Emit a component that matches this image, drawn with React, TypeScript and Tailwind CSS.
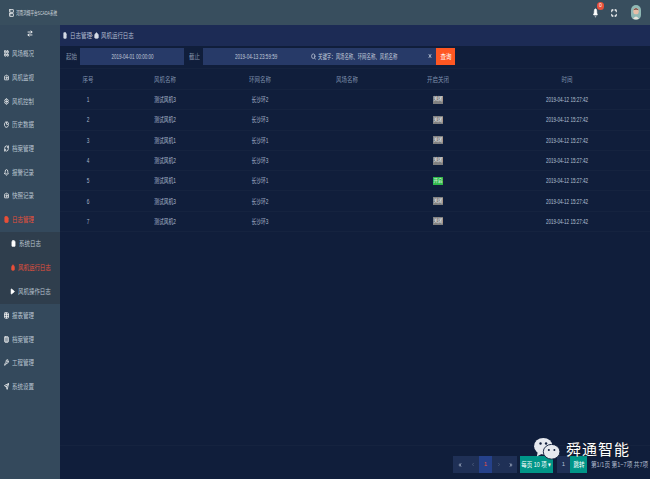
import React from 'react';
import { Bell, ArrowRightLeft, LayoutGrid, Camera, Settings, PieChart, Search, Wrench, Send, FileText, Home, Play, Table, Columns3, Clipboard, ChevronRight, ChevronLeft, ChevronsLeft, ChevronsRight, X, RefreshCw, Server, Maximize } from 'lucide-react';

const font = "font-['Liberation_Sans','Noto_Sans_CJK_SC',sans-serif]";

// 原图的文字和图标都是被横向压缩过的
const cnLeft = 'inline-block origin-left scale-x-[.78] whitespace-nowrap text-[7px] leading-none';
const cnMid = 'inline-block origin-center scale-x-[.78] whitespace-nowrap text-[7px] leading-none';
const cellMid = 'inline-block origin-center scale-x-[.68] whitespace-nowrap text-[7px] leading-none';
const numMid = 'inline-block origin-center scale-x-[.65] whitespace-nowrap text-[7px] leading-none';
const squeeze = { preserveAspectRatio: 'none' };

const menu = [
  { name: '风场概况', icon: LayoutGrid },
  { name: '风机监视', icon: Camera },
  { name: '风机控制', icon: Settings },
  { name: '历史数据', icon: PieChart },
  { name: '档案管理', icon: RefreshCw },
  { name: '报警记录', icon: Bell },
  { name: '快照记录', icon: Camera },
];

const menuBottom = [
  { name: '报表管理', icon: Table },
  { name: '档案管理', icon: Columns3 },
  { name: '工程管理', icon: Wrench },
  { name: '系统设置', icon: Send },
];

const rows = [
  { id: 1, fan: '测试风机3', ring: '长沙环2', on: false },
  { id: 2, fan: '测试风机2', ring: '长沙环3', on: false },
  { id: 3, fan: '测试风机1', ring: '长沙环1', on: false },
  { id: 4, fan: '测试风机2', ring: '长沙环3', on: false },
  { id: 5, fan: '测试风机1', ring: '长沙环1', on: true },
  { id: 6, fan: '测试风机3', ring: '长沙环2', on: false },
  { id: 7, fan: '测试风机2', ring: '长沙环3', on: false },
];

const gridCols = 'grid grid-cols-[56px_98px_92px_82px_100px_158px] items-center text-center';

const App: React.FC = () => {
  return (
    <div className={`relative flex h-[479px] w-[650px] flex-col overflow-hidden bg-[#34495c] text-[6px] ${font}`}>
      {/* 顶部 */}
      <div className="flex h-[25px] shrink-0 items-center bg-[#384e5e] pl-[9px] pr-[9px] text-[#cfd6dd]">
        <Server {...squeeze} className="h-[8px] w-[5px] text-white" strokeWidth={3} />
        <span className="ml-[2px] inline-block origin-left scale-x-[.6] whitespace-nowrap text-[6px] leading-none">河南鸿翔平台SCADA系统</span>
        <div className="ml-auto flex items-center">
          <div className="relative">
            <Bell {...squeeze} className="h-[10px] w-[5px] fill-white text-white" />
            <span className="absolute left-[4px] top-[-6px] flex h-[8px] w-[7px] items-center justify-center rounded-full bg-[#e8503a] text-[5px] leading-none text-white">0</span>
          </div>
          <Maximize {...squeeze} className="ml-[13px] h-[8px] w-[6px] text-white" strokeWidth={4} />
          <div className="ml-[14px] flex h-[15px] w-[10px] items-start justify-center overflow-hidden rounded-full bg-[#8fb8b4]">
            <svg viewBox="0 0 11 15" className="h-[15px] w-[10px]">
              <ellipse cx="5.5" cy="6" rx="3" ry="3.5" fill="#e6bfa8" />
              <path d="M2.5 5 Q5.5 0.5 8.5 5 Q5.5 3.5 2.5 5Z" fill="#5a2c2c" />
              <path d="M2 15 Q5.5 9 9 15Z" fill="#e8e4dc" />
            </svg>
          </div>
        </div>
      </div>

      <div className="flex min-h-0 flex-1">
        {/* 侧边栏 */}
        <div className="w-[60px] shrink-0 text-[#b9c4d0]">
          <div className="flex h-[17px] items-center justify-center">
            <ArrowRightLeft {...squeeze} className="h-[7px] w-[6px] text-white" strokeWidth={3} />
          </div>
          {menu.map((m, i) => (
            <div key={i} className="flex h-[23.7px] items-center pl-[4px]">
              <m.icon {...squeeze} className="h-[7px] w-[5px] text-white" strokeWidth={3} />
              <span className={`ml-[3px] ${cnLeft}`}>{m.name}</span>
            </div>
          ))}
          <div className="flex h-[23.7px] items-center pl-[4px] text-[#e8503a]">
            <FileText {...squeeze} className="h-[7px] w-[5px] fill-[#e8503a]" strokeWidth={3} />
            <span className={`ml-[3px] ${cnLeft}`}>日志管理</span>
          </div>
          <div className="bg-[#2f3e4d]">
            <div className="flex h-[24px] items-center pl-[11px]">
              <Clipboard {...squeeze} className="h-[7px] w-[5px] fill-white text-white" />
              <span className={`ml-[3px] ${cnLeft}`}>系统日志</span>
            </div>
            <div className="flex h-[24px] items-center pl-[11px] text-[#e8503a]">
              <Home {...squeeze} className="h-[7px] w-[5px] fill-[#e8503a]" />
              <span className={`ml-[3px] ${cnLeft}`}>风机运行日志</span>
            </div>
            <div className="flex h-[24px] items-center pl-[10px]">
              <Play {...squeeze} className="h-[7px] w-[5px] fill-white text-white" />
              <span className={`ml-[3px] ${cnLeft}`}>风机操作日志</span>
            </div>
          </div>
          {menuBottom.map((m, i) => (
            <div key={i} className="flex h-[23.7px] items-center pl-[4px]">
              <m.icon {...squeeze} className="h-[7px] w-[5px] text-white" strokeWidth={3} />
              <span className={`ml-[3px] ${cnLeft}`}>{m.name}</span>
            </div>
          ))}
        </div>

        {/* 主体 */}
        <div className="flex min-w-0 flex-1 flex-col bg-[#101e3b] text-[#a9b6cb]">
          <div className="flex h-[21px] shrink-0 items-center bg-[#1c2b55] pl-[3px] text-[#b4bfd2]">
            <FileText {...squeeze} className="h-[7px] w-[4px] fill-[#d5dbe6] text-[#d5dbe6]" />
            <span className={`ml-[3px] w-[20px] ${cnLeft}`}>日志管理</span>
            <ChevronRight {...squeeze} className="h-[5px] w-[4px]" strokeWidth={3} />
            <Home {...squeeze} className="h-[7px] w-[5px] fill-[#d5dbe6] text-[#d5dbe6]" />
            <span className={`ml-[2px] ${cnLeft}`}>风机运行日志</span>
          </div>

          <div className="flex h-[23px] shrink-0 items-center border-b border-[#15233f] pb-[2px] pl-[6px]">
            <span className={`w-[14px] text-[#8492aa] ${cnLeft}`}>起始</span>
            <div className="flex h-[17px] w-[104px] items-center justify-center bg-[#273a68] text-[#c2cbda]">
              <span className={numMid}>2019-04-01 00:00:00</span>
            </div>
            <span className={`ml-[5px] w-[14px] text-[#8492aa] ${cnLeft}`}>截止</span>
            <div className="flex h-[17px] w-[233px] items-center bg-[#273a68] text-[#c2cbda]">
              <span className={`ml-[32px] w-[41px] origin-left ${numMid}`}>2019-04-13 23:59:59</span>
              <Search {...squeeze} className="ml-[35px] h-[7px] w-[5px]" strokeWidth={3} />
              <span className="ml-[2px] inline-block w-[80px] origin-left scale-x-[.63] whitespace-nowrap text-[7px] leading-none">关键字：风场名称、环网名称、风机名称</span>
              <X {...squeeze} className="ml-auto mr-[4px] h-[6px] w-[4px]" strokeWidth={4} />
            </div>
            <div className="flex h-[17px] w-[19px] items-center justify-center bg-[#ff5722] text-white">
              <span className={cnMid}>查询</span>
            </div>
          </div>

          <div className="min-h-0 flex-1">
            <div className={`${gridCols} h-[21px] border-b border-[#15233f] text-[#7f90ad]`}>
              <span className={cnMid}>序号</span>
              <span className={cnMid}>风机名称</span>
              <span className={cnMid}>环网名称</span>
              <span className={cnMid}>风场名称</span>
              <span className={cnMid}>开启关闭</span>
              <span className={cnMid}>时间</span>
            </div>
            {rows.map(r => (
              <div key={r.id} className={`${gridCols} h-[20.3px] border-b border-[#15233f]`}>
                <span className={cellMid}>{r.id}</span>
                <span className={cellMid}>{r.fan}</span>
                <span className={cellMid}>{r.ring}</span>
                <span></span>
                <span className="flex justify-center">
                  <span className={`flex h-[8px] w-[10px] items-center justify-center text-[4.5px] leading-none text-white ${r.on ? 'bg-[#2eb84a]' : 'bg-[#808080]'}`}>
                    {r.on ? '开启' : '关闭'}
                  </span>
                </span>
                <span className={`text-[#b4c0d4] ${numMid}`}>2019-04-12 15:27:42</span>
              </div>
            ))}
          </div>

          {/* 分页 */}
          <div className="flex h-[34px] shrink-0 items-start justify-end border-t border-[#15233f] pt-[10px] text-[#b4bfd2]">
            <div className="flex h-[17px] items-center bg-[#1f3056]">
              <span className="flex h-full w-[13px] items-center justify-center"><ChevronsLeft {...squeeze} className="h-[6px] w-[4px]" strokeWidth={3} /></span>
              <span className="flex h-full w-[13px] items-center justify-center text-[#5f6f8c]"><ChevronLeft {...squeeze} className="h-[5px] w-[4px]" strokeWidth={3} /></span>
              <span className="flex h-full w-[13px] items-center justify-center bg-[#25418a] text-[6px] text-[#e8503a]">1</span>
              <span className="flex h-full w-[13px] items-center justify-center text-[#5f6f8c]"><ChevronRight {...squeeze} className="h-[5px] w-[4px]" strokeWidth={3} /></span>
              <span className="flex h-full w-[12px] items-center justify-center"><ChevronsRight {...squeeze} className="h-[6px] w-[4px]" strokeWidth={3} /></span>
            </div>
            <div className="ml-[3px] flex h-[17px] w-[33px] items-center justify-center bg-[#009688] text-white">
              <span className={`${cnMid} text-[6px]`}>每页 10 项 ▾</span>
            </div>
            <div className="ml-[4px] flex h-[17px] w-[13px] items-center justify-center bg-[#1f3056] text-[6px]">1</div>
            <div className="flex h-[17px] w-[17px] items-center justify-center bg-[#009688] text-white">
              <span className={cnMid}>跳转</span>
            </div>
            <span className="ml-[4px] mt-[5px] inline-block w-[59px] origin-left scale-x-[.8] whitespace-nowrap text-[7px] leading-none">第1/1页 第1~7项 共7项</span>
          </div>
        </div>
      </div>

      {/* 水印 */}
      <div className="absolute left-[533px] top-[437px] flex items-center">
        <svg viewBox="0 0 30 26" className="h-[24px] w-[28px]">
          <ellipse cx="11" cy="10" rx="10" ry="9" fill="#e6e9ee" />
          <path d="M5 16 L4 21 L10 18Z" fill="#e6e9ee" />
          <ellipse cx="20" cy="16" rx="9" ry="8" fill="#e6e9ee" stroke="#101e3b" strokeWidth="1" />
          <circle cx="8" cy="7" r="1.3" fill="#101e3b" />
          <circle cx="14" cy="7" r="1.3" fill="#101e3b" />
          <circle cx="17" cy="14" r="1.1" fill="#101e3b" />
          <circle cx="23" cy="14" r="1.1" fill="#101e3b" />
        </svg>
        <span className="ml-[5px] text-[15px] leading-none tracking-[1px] text-white [text-shadow:0_0_2px_#1a1a1a]">舜通智能</span>
      </div>
    </div>
  );
};

export default App;
